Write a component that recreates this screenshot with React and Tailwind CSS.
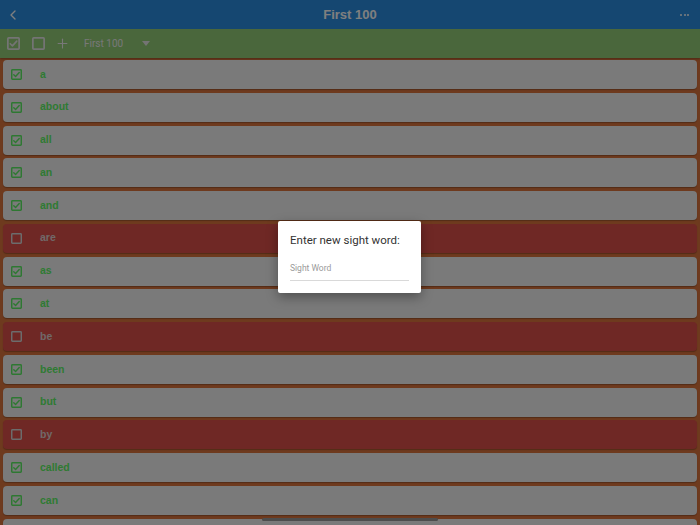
import { ChevronLeft, Plus } from "lucide-react";

const words = [
  { w: "a", ok: true },
  { w: "about", ok: true },
  { w: "all", ok: true },
  { w: "an", ok: true },
  { w: "and", ok: true },
  { w: "are", ok: false },
  { w: "as", ok: true },
  { w: "at", ok: true },
  { w: "be", ok: false },
  { w: "been", ok: true },
  { w: "but", ok: true },
  { w: "by", ok: false },
  { w: "called", ok: true },
  { w: "can", ok: true },
  { w: "", ok: true },
];

function Box({ checked, color, size = 11 }) {
  return (
    <svg width={size} height={size} viewBox="0 0 12 12" fill="none" stroke={color}>
      <rect x="0.8" y="0.8" width="10.4" height="10.4" rx="0.8" strokeWidth="1.6" />
      {checked && (
        <path d="M3 6.2l2 2 4-4.4" strokeWidth="1.5" strokeLinecap="round" strokeLinejoin="round" />
      )}
    </svg>
  );
}

function WordRow({ w, ok }) {
  return (
    <div
      className={`flex items-center h-[29px] shrink-0 rounded-[4px] shadow-[0_1px_1px_rgba(0,0,0,0.25)] ${
        ok ? "bg-[#f4f4f4]" : "bg-[#de504a]"
      }`}
    >
      <div className="w-[37px] pl-[8px] flex">
        <Box checked={ok} color={ok ? "#5cf064" : "#d8d8d8"} />
      </div>
      <span
        className={`text-[10.5px] font-bold ${ok ? "text-[#5ef466]" : "text-[#e2d2d0]"}`}
      >
        {w}
      </span>
    </div>
  );
}

export default function App() {
  return (
    <div
      className="relative w-[700px] h-[525px] overflow-hidden bg-[#dc743c]"
      style={{ fontFamily: "'Liberation Sans', Arial, sans-serif" }}
    >
      {/* nav bar */}
      <div className="relative flex items-center justify-between h-[29px] bg-[#2a8ee2] px-[5px] text-white">
        <ChevronLeft size={16} strokeWidth={2} />
        <span className="absolute left-0 right-0 text-center text-[13px] font-bold pointer-events-none">
          First 100
        </span>
        <div className="flex gap-[1.5px] pr-[6px]">
          <div className="w-[2px] h-[2px] rounded-full bg-white" />
          <div className="w-[2px] h-[2px] rounded-full bg-white" />
          <div className="w-[2px] h-[2px] rounded-full bg-white" />
        </div>
      </div>

      {/* toolbar */}
      <div className="flex items-center h-[29px] bg-[#94ce78] pl-[7px] text-[#f0f0f0] shadow-[0_1px_2px_rgba(0,0,0,0.3)]">
        <Box checked color="#e8e8e8" size={13} />
        <div className="ml-[12px] flex">
          <Box checked={false} color="#e8e8e8" size={13} />
        </div>
        <Plus size={15} strokeWidth={1.8} className="ml-[10px]" />
        <span className="ml-[14px] text-[10px]" style={{ fontFamily: "Roboto, sans-serif" }}>
          First 100
        </span>
        <svg className="ml-[19px]" width="8" height="5" viewBox="0 0 8 5">
          <path d="M0 0h8L4 5z" fill="#e8e8e8" />
        </svg>
      </div>

      {/* list */}
      <div className="flex flex-col gap-[3.77px] px-[3px] pt-[2px]">
        {words.map((it, i) => (
          <WordRow key={i} {...it} />
        ))}
      </div>

      {/* home indicator */}
      <div className="absolute left-[262px] bottom-[4px] w-[176px] h-[3px] rounded-full bg-[#9a9a9a]" />

      {/* backdrop */}
      <div className="absolute inset-0 bg-black/50" />

      {/* dialog */}
      <div
        className="absolute left-[278px] top-[221px] w-[143px] h-[72px] bg-white rounded-[2px] shadow-[0_4px_12px_rgba(0,0,0,0.35)] px-[12px] pt-[12px]"
        style={{ fontFamily: "Roboto, sans-serif" }}
      >
        <div className="text-[11.5px] text-[#333] leading-[14px]">Enter new sight word:</div>
        <div className="mt-[16px] text-[8.5px] text-[#9a9a9a] leading-[10px]">Sight Word</div>
        <div className="mt-[7px] h-[1px] bg-[#d9d9d9]" />
      </div>
    </div>
  );
}
